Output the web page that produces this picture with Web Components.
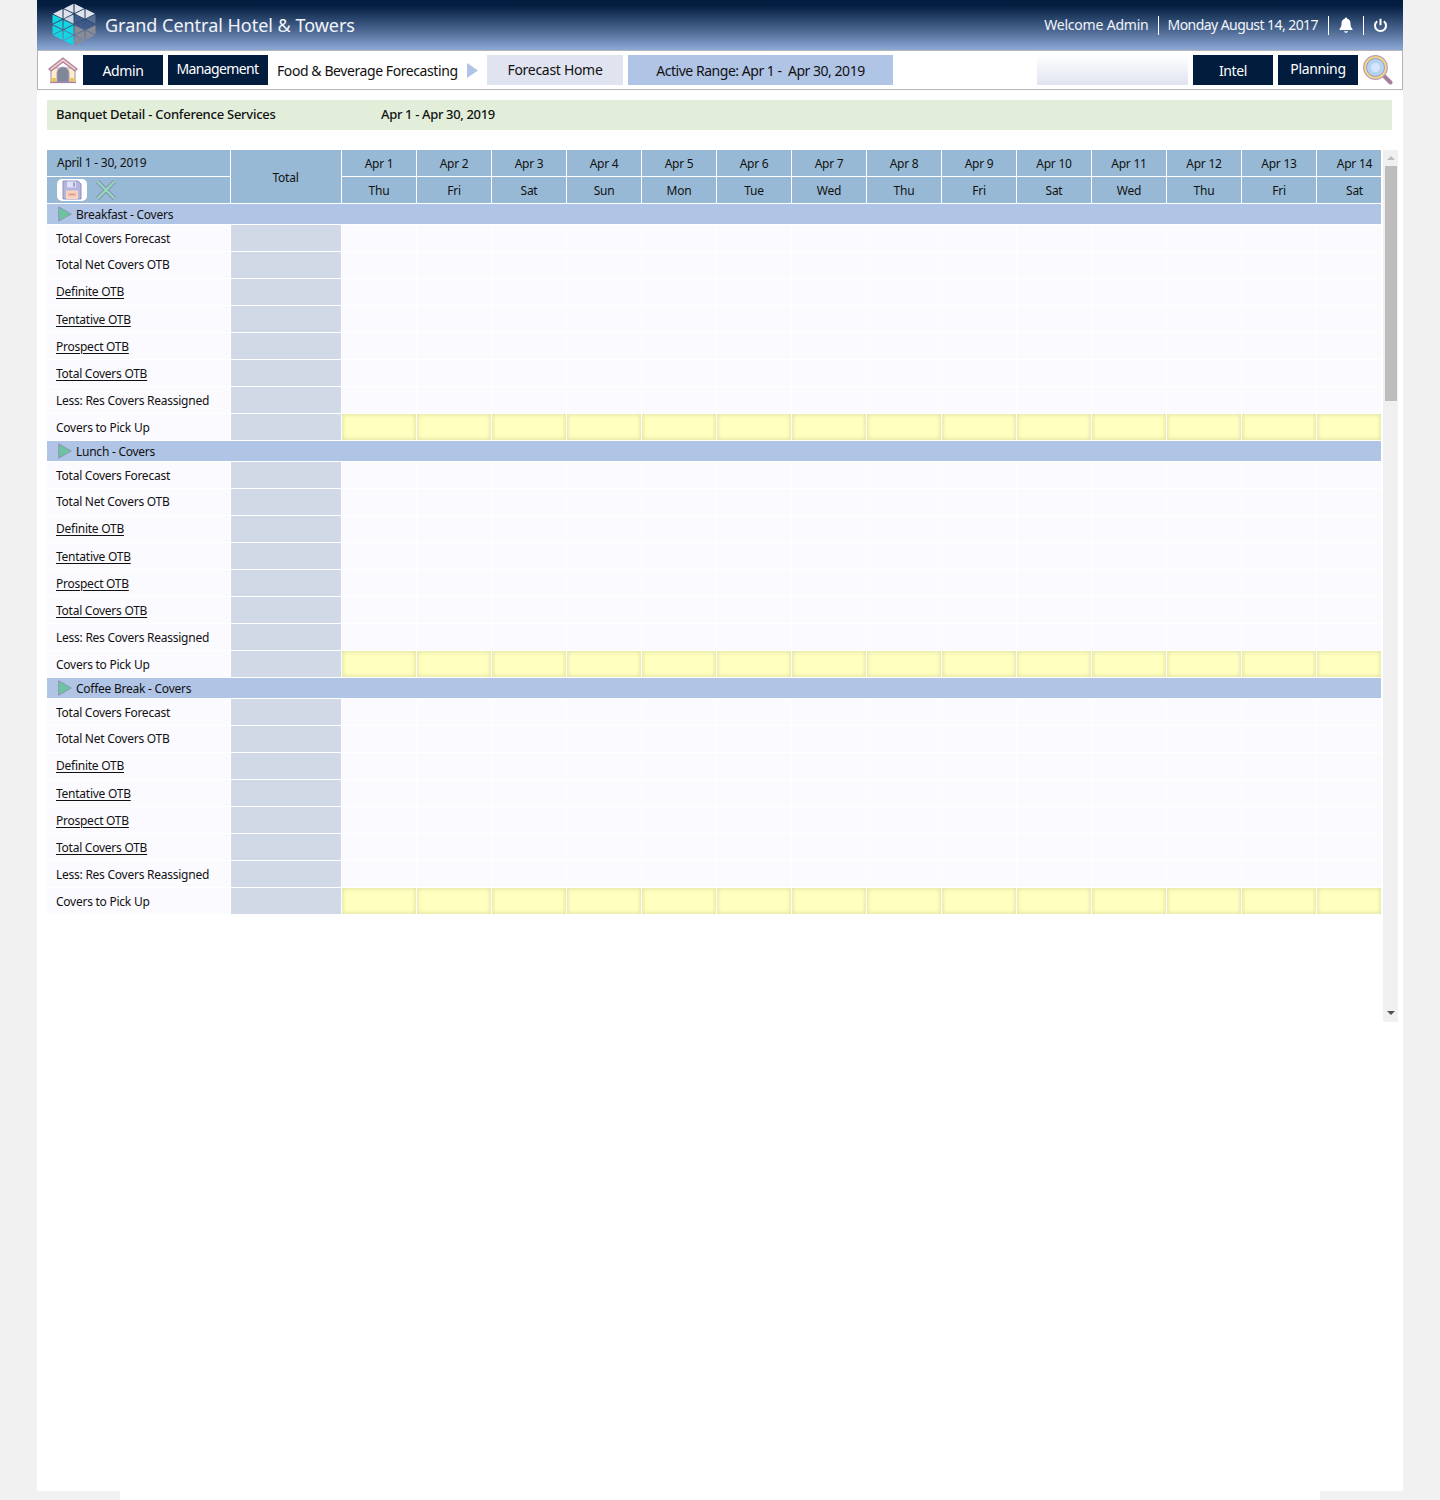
<!DOCTYPE html>
<html>
<head>
<meta charset="utf-8">
<title>Banquet Detail</title>
<style>
  html, body { margin: 0; height: 1500px; overflow: hidden; background: #f1f1f1; }
  body { font-family: "Noto Sans", "Open Sans", sans-serif; color: #111; }
</style>
</head>
<body>
<app-shell>
  <hotel-header></hotel-header>
  <nav-bar></nav-bar>
  <title-strip></title-strip>
  <scroll-pane>
    <grid-head></grid-head>
    <banquet-section name="Breakfast - Covers"></banquet-section>
    <banquet-section name="Lunch - Covers"></banquet-section>
    <banquet-section name="Coffee Break - Covers"></banquet-section>
  </scroll-pane>
</app-shell>

<script>
const COLS = '184px 111px repeat(13, 75px) 64px';
const DATES = ['Thu', 'Fri', 'Sat', 'Sun', 'Mon', 'Tue', 'Wed', 'Thu', 'Fri', 'Sat', 'Wed', 'Thu', 'Fri', 'Sat'];
const METRICS = [
  { label: 'Total Covers Forecast', up: 0 },
  { label: 'Total Net Covers OTB', up: 1 },
  { label: 'Definite OTB', link: true, up: 1 },
  { label: 'Tentative OTB', link: true, up: 0 },
  { label: 'Prospect OTB', link: true, up: 0 },
  { label: 'Total Covers OTB', link: true, up: 0 },
  { label: 'Less: Res Covers Reassigned', up: 0 },
  { label: 'Covers to Pick Up', up: 0, pick: true },
];

function mount(el, html) {
  el.attachShadow({ mode: 'open' }).innerHTML = html;
}

class AppShell extends HTMLElement {
  constructor() {
    super();
    mount(this, `
      <style>
        :host { display: flex; flex-direction: column; width: 1366px; height: 1500px; margin-left: 37px; background: #fff; }
        .main { flex: 1; }
        .foot { display: flex; height: 9px; }
        .foot i { width: 83px; background: #f1f1f1; }
        .foot b { flex: 1; background: #fff; }
      </style>
      <div class="main"><slot></slot></div>
      <div class="foot"><i></i><b></b><i></i></div>
    `);
  }
}

class HotelHeader extends HTMLElement {
  constructor() {
    super();
    mount(this, `
      <style>
        :host { display: flex; align-items: center; height: 50px; padding-left: 15px; box-sizing: border-box;
          color: #f2f4f8; background: linear-gradient(#021c3e 0%, #041f41 12%, #4a6690 60%, #8ca8d6 100%); }
        svg { display: block; }
        .logo { margin-right: 8px; }
        .name { flex: 1; font-size: 18px; letter-spacing: -.02px; padding-bottom: 1px; }
        .item { font-size: 14px; letter-spacing: -.2px; padding: 0 9px; height: 19px; line-height: 18px; }
        .date { letter-spacing: -.56px; padding-right: 10px; }
        .sep { border-left: 1px solid #fff; }
        .icon { height: 19px; padding: 0 9px; display: flex; align-items: center; }
      </style>
      <svg class="logo" id="logo" width="45" height="44" viewBox="0 0 45 44"></svg>
      <span class="name">Grand Central Hotel &amp; Towers</span>
      <span class="item">Welcome Admin</span>
      <span class="item date sep">Monday August 14, 2017</span>
      <span class="icon sep">
        <svg width="16" height="16" viewBox="0 0 16 16" fill="#fff"><path d="M8 0.5c.8 0 1.3.6 1.3 1.3 2.3.6 3.2 2.5 3.2 4.7 0 2.7.7 4 2 5.5v1H1.5v-1c1.300-1.500 2-2.800 2-5.500 0-2.200.9-4.100 3.200-4.700C6.700 1.100 7.200.5 8 .5zM6 14.300h4c0 .9-.9 1.500-2 1.500s-2-.6-2-1.500z"/></svg>
      </span>
      <span class="icon sep" style="padding-right:15px">
        <svg width="15" height="15" viewBox="0 0 15 15" fill="none" stroke="#fff" stroke-width="2"><path d="M4.200 3.200a5.500 5.500 0 1 0 6.600 0"/><path d="M7.500 0.800v6.400"/></svg>
      </span>
    `);
    this.drawLogo();
  }

  // mesh of left/right pointing triangles, clipped to a hexagon
  drawLogo() {
    const w = 11;
    const s = 10.75;
    const cy = 21.5;
    let out = '';
    const tri = (a, b, c) => {
      const mx = (a[0] + b[0] + c[0]) / 3;
      const my = (a[1] + b[1] + c[1]) / 3;
      const pts = [a, b, c].map((p) => `${(mx + (p[0] - mx) * 0.86).toFixed(1)},${(my + (p[1] - my) * 0.86).toFixed(1)}`);
      let fill = '#888c96';
      if (my < 14) fill = '#dfe2ea';
      else if (mx < 22) fill = (mx > 11 && my < 21) ? '#c9d3e2' : '#14d6e2';
      else if (mx > 33 && my < 21) fill = '#5a6f95';
      else if (my < 23) fill = '#3f5a88';
      out += `<polygon points="${pts.join(' ')}" fill="${fill}"/>`;
    };
    const ys = (col) => {
      const odd = col % 2 === 1;
      const n = col === 2 ? 2 : 1;
      const list = [];
      if (odd) {
        for (let k = -2; k < 2; k += 1) list.push(cy + (k * s) + (s / 2));
      } else {
        for (let k = -n; k <= n; k += 1) list.push(cy + (k * s));
      }
      return list;
    };
    for (let c = 0; c < 4; c += 1) {
      const a = ys(c);
      const b = ys(c + 1);
      const aSmall = a.length < b.length;
      const small = aSmall ? a : b;
      const xs = aSmall ? c * w : (c + 1) * w;
      const xb = aSmall ? (c + 1) * w : c * w;
      small.forEach((y) => tri([xs, y], [xb, y - (s / 2)], [xb, y + (s / 2)]));
      for (let i = 0; i < small.length - 1; i += 1) {
        tri([xs, small[i]], [xs, small[i + 1]], [xb, (small[i] + small[i + 1]) / 2]);
      }
    }
    this.shadowRoot.getElementById('logo').innerHTML = out;
  }
}

class NavButton extends HTMLElement {
  constructor() {
    super();
    mount(this, `
      <style>
        :host { display: flex; align-items: center; justify-content: center; box-sizing: border-box; height: 30px; white-space: nowrap;
          background: var(--bg, #021c3e); color: var(--fg, #fff); font-size: 14px; letter-spacing: var(--ls, -.35px); }
      </style>
      <slot></slot>
    `);
  }
}

class NavBar extends HTMLElement {
  constructor() {
    super();
    mount(this, `
      <style>
        :host { display: flex; gap: 5px; height: 40px; box-sizing: border-box; padding: 4px 9px 4px 10px;
          border: 1px solid #b5b5b5; background: #fff; }
        svg { display: block; flex: none; }
        .crumb { font-size: 14px; letter-spacing: -.42px; color: #111; white-space: nowrap; display: flex; align-items: center; padding-left: 4px; width: 189px; padding-top: 1px; box-sizing: border-box; }
        .arrow { margin: 8px 4px 0 0; }
        .space { flex: 1; }
        .search { width: 151px; height: 30px; background: linear-gradient(#fff, #e0e4f0); }
        .pb { padding-bottom: 3px; }
        .pb1 { padding-bottom: 1px; }
        .pt { padding-top: 1px; }
      </style>
      <svg width="30" height="30" viewBox="0 0 30 30">
        <path d="M3 27V13h24v14z" fill="#fbeec6" stroke="#b59ac0" stroke-width="1.200"/>
        <path d="M1 14 15 3l14 11-2 2L15 7 3 16z" fill="#f5cdb8" stroke="#a77fa8" stroke-width="1.200"/>
        <path d="M9 27V18a6 6 0 0 1 12 0v9z" fill="#7f8799" stroke="#b59ac0"/>
        <path d="M3 23h5v4H3zM22 23h5v4h-5z" fill="#e9c463"/>
        <path d="M2 27.500h26" stroke="#a77fa8" stroke-width="1.200"/>
      </svg>
      <nav-button class="pt" style="width:80px">Admin</nav-button>
      <nav-button class="pb" style="width:100px;--ls:-.62px;padding-right:1px">Management</nav-button>
      <span class="crumb">Food &amp; Beverage Forecasting</span>
      <svg class="arrow" width="11" height="15" viewBox="0 0 11 15"><path d="M0 0l11 7.500L0 15z" fill="#b0c4e8"/></svg>
      <nav-button class="pb1" style="width:136px;--bg:#e0e4f0;--fg:#111;--ls:-.3px">Forecast Home</nav-button>
      <nav-button class="pt" style="width:265px;--bg:#b0c4e6;--fg:#111;--ls:-.47px">Active Range: Apr 1 -&nbsp; Apr 30, 2019</nav-button>
      <span class="space"></span>
      <span class="search"></span>
      <nav-button class="pt" style="width:80px">Intel</nav-button>
      <nav-button class="pb" style="width:80px">Planning</nav-button>
      <svg width="30" height="30" viewBox="0 0 30 30">
        <path d="M20 20l7.500 7.500" stroke="#a77f98" stroke-width="4" stroke-linecap="round"/>
        <circle cx="12.500" cy="12.500" r="11.800" fill="#f5d878" stroke="#b59ac0" stroke-width="1.200"/>
        <circle cx="12.500" cy="12.500" r="9" fill="#b6d2f2" stroke="#9a9ad0" stroke-width="1"/>
        <circle cx="12.500" cy="12.500" r="4.500" fill="#d5e6fa"/>
      </svg>
    `);
  }
}

class TitleStrip extends HTMLElement {
  constructor() {
    super();
    mount(this, `
      <style>
        :host { display: flex; align-items: center; height: 30px; box-sizing: border-box; margin: 10px 11px 20px 10px; padding: 0 0 2px 9px;
          background: #e2eed9; font-size: 13px; font-weight: 500; letter-spacing: -.25px; color: #111; }
        .name { width: 325px; }
        .range { letter-spacing: -.35px; }
      </style>
      <span class="name">Banquet Detail - Conference Services</span>
      <span class="range">Apr 1 - Apr 30, 2019</span>
    `);
  }
}

class ScrollPane extends HTMLElement {
  constructor() {
    super();
    mount(this, `
      <style>
        :host { display: flex; gap: 2px; height: 872px; margin: 0 5px 0 10px; }
        .body { width: 1334px; }
        .bar { width: 15px; background: #f0f0f0; display: flex; flex-direction: column; align-items: center; }
        .btn { height: 16px; display: flex; align-items: center; justify-content: center; flex: none; }
        .thumb { width: 12px; height: 235px; background: #bdbdbd; margin-left: 1px; }
        .rest { flex: 1; }
        .end { height: 18px; }
      </style>
      <div class="body"><slot></slot></div>
      <div class="bar">
        <div class="btn"><svg width="8" height="4" viewBox="0 0 8 4"><path d="M0 4l4-4 4 4z" fill="#bdbdbd"/></svg></div>
        <div class="thumb"></div>
        <div class="rest"></div>
        <div class="btn end"><svg width="8" height="4" viewBox="0 0 8 4"><path d="M0 0l4 4 4-4z" fill="#505050"/></svg></div>
      </div>
    `);
  }
}

class GridHead extends HTMLElement {
  constructor() {
    super();
    let days = '';
    DATES.forEach((day, i) => {
      const last = i === DATES.length - 1 ? ' last' : '';
      days += `<div class="c d${last}" style="grid-column:${i + 3};grid-row:1">Apr ${i + 1}</div>`;
      days += `<div class="c d${last}" style="grid-column:${i + 3};grid-row:2">${day}</div>`;
    });
    mount(this, `
      <style>
        :host { display: grid; grid-template-columns: ${COLS}; grid-template-rows: 27px 27px; font-size: 12px; letter-spacing: -.25px; color: #111; }
        .c { background: #97b9d5; border-right: 1px solid #fff; border-bottom: 1px solid #fff; display: flex; align-items: center; white-space: nowrap; }
        .d { justify-content: center; }
        .last { border-right: 0; padding-left: 11px; }
        .range { padding: 0 0 2px 10px; }
        .tools { padding-left: 10px; gap: 9px; }
        .save { width: 30px; height: 22px; background: #fff; border-radius: 5px; display: flex; align-items: center; justify-content: center; }
        .total { grid-column: 2; grid-row: 1 / span 2; justify-content: center; padding: 2px 1px 0 0; }
        svg { display: block; }
      </style>
      <div class="c range" style="grid-column:1;grid-row:1">April 1 - 30, 2019</div>
      <div class="c tools" style="grid-column:1;grid-row:2">
        <span class="save">
          <svg width="20" height="20" viewBox="0 0 20 20">
            <path d="M1 1h15l3 3v15H1z" fill="#b4b4de" stroke="#8f8fc4"/>
            <path d="M5 1.500h9v6H5z" fill="#dde3f5"/>
            <path d="M11 2.500h2v4h-2z" fill="#9a9ad0"/>
            <path d="M4 10.500h12v8.500H4z" fill="#f7d3c0"/>
            <path d="M6.500 13.500h7v2h-7z" fill="#e59a8a"/>
          </svg>
        </span>
        <svg width="20" height="20" viewBox="0 0 20 20">
          <path d="M1.500 1.500l17 17M18.500 1.500l-17 17" stroke="#8e92bc" stroke-width="4.400"/>
          <path d="M1.500 1.500l17 17M18.500 1.500l-17 17" stroke="#8ee0b4" stroke-width="2"/>
        </svg>
      </div>
      <div class="c total">Total</div>
      ${days}
    `);
  }
}

class MetricRow extends HTMLElement {
  connectedCallback() {
    if (this.shadowRoot) return;
    const label = this.getAttribute('label');
    const link = this.hasAttribute('link');
    const pick = this.hasAttribute('pick');
    const up = Number(this.getAttribute('up') || 0);
    let cells = '';
    for (let i = 0; i < 14; i += 1) {
      cells += `<div class="c${pick ? ' pick' : ''}${i === 13 ? ' last' : ''}"></div>`;
    }
    mount(this, `
      <style>
        :host { display: grid; grid-template-columns: ${COLS}; height: 27px; font-size: 12px; letter-spacing: -.25px; color: #111; background: #fff; }
        .c { height: 26px; background: #fbfaff; border-right: 1px solid #fefeff; }
        .last { border-right: 0; }
        .label { display: flex; align-items: center; padding: 0 0 ${up * 2}px 9px; box-sizing: border-box; border-right: 1px solid #fff; }
        .link { text-decoration: underline; text-underline-offset: 2px; }
        .total { background: #d2d9e6; border-right: 1px solid #fff; }
        .pick { background: #ffffc0; box-shadow: inset 0 0 4px 1px #e2e2a4; border-right-color: #fff; }
      </style>
      <div class="c label"><span class="${link ? 'link' : ''}">${label}</span></div>
      <div class="c total"></div>
      ${cells}
    `);
  }
}

class BanquetSection extends HTMLElement {
  connectedCallback() {
    if (this.shadowRoot) return;
    mount(this, `
      <style>
        :host { display: block; }
        .bar { height: 20px; margin-bottom: 1px; background: #b0c4e6; display: flex; align-items: center; padding-left: 11px; gap: 4px;
          font-size: 12px; letter-spacing: -.25px; color: #111; }
        svg { display: block; }
      </style>
      <div class="bar">
        <svg width="14" height="16" viewBox="0 0 14 16"><path d="M.7.8l12.600 7.200L.7 15.200z" fill="#6cc3a0" stroke="#8f94b8"/></svg>
        <span>${this.getAttribute('name')}</span>
      </div>
      <div id="rows"></div>
    `);
    const rows = this.shadowRoot.getElementById('rows');
    METRICS.forEach((m) => {
      const row = document.createElement('metric-row');
      row.setAttribute('label', m.label);
      row.setAttribute('up', m.up);
      if (m.link) row.setAttribute('link', '');
      if (m.pick) row.setAttribute('pick', '');
      rows.appendChild(row);
    });
  }
}

customElements.define('app-shell', AppShell);
customElements.define('hotel-header', HotelHeader);
customElements.define('nav-button', NavButton);
customElements.define('nav-bar', NavBar);
customElements.define('title-strip', TitleStrip);
customElements.define('scroll-pane', ScrollPane);
customElements.define('grid-head', GridHead);
customElements.define('metric-row', MetricRow);
customElements.define('banquet-section', BanquetSection);
</script>
</body>
</html>
